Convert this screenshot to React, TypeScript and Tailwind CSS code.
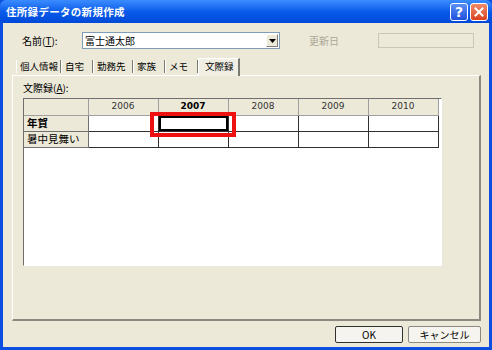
import React from "react";

const YEARS = ["2006", "2007", "2008", "2009", "2010"];
const ROWS = [
  { label: "年賀", bold: true },
  { label: "暑中見舞い", bold: false },
];
const TABS = [
  { label: "個人情報", w: "w-[45px]" },
  { label: "自宅", w: "w-[32px]" },
  { label: "勤務先", w: "w-[40px]" },
  { label: "家族", w: "w-[32px]" },
  { label: "メモ", w: "w-[33px]" },
];

const jp = "font-['Noto_Sans_CJK_JP',sans-serif]";

function TitleButton({ kind }: { kind: "help" | "close" }) {
  const bg =
    kind === "help"
      ? "bg-linear-to-b from-[#5C8FF5] to-[#1E4FDB]"
      : "bg-linear-to-b from-[#F08A6A] to-[#D9401C]";
  return (
    <div
      className={`w-[18px] h-[18px] rounded-[3px] border border-white flex items-center justify-center ${bg}`}
    >
      {kind === "help" ? (
        <span className="text-white text-[14px] font-bold leading-none font-['DejaVu_Sans',sans-serif]">?</span>
      ) : (
        <svg width="10" height="10" viewBox="0 0 10 10">
          <path d="M1.5 1.5 L8.5 8.5 M8.5 1.5 L1.5 8.5" stroke="white" strokeWidth="2" strokeLinecap="square" />
        </svg>
      )}
    </div>
  );
}

export default function App() {
  return (
    <div className={`w-[492px] h-[350px] flex flex-col bg-[#0A4FE0] ${jp} text-[10px] text-black`}>
      {/* title bar */}
      <div className="h-[23px] shrink-0 flex items-center justify-between pl-[6px] pr-[4px] rounded-t-[6px] bg-linear-to-b from-[#3B8CFF] via-[#0A5BEA] to-[#0049D8]">
        <span className="text-white font-bold text-[10.5px] tracking-[0.3px]">住所録データの新規作成</span>
        <div className="flex gap-[2px]">
          <TitleButton kind="help" />
          <TitleButton kind="close" />
        </div>
      </div>

      {/* body */}
      <div className="flex-1 mx-[3px] mb-[3px] bg-[#ECE9D8] flex flex-col">
        {/* name row */}
        <div className="flex items-center h-[17px] mt-[9px] pl-[19px]">
          <span className="w-[60px]">
            名前(<span className="underline">T</span>):
          </span>
          <div className="w-[198px] h-[17px] bg-white border border-[#7F9DB9] flex items-center">
            <span className="flex-1 pl-[2px] leading-none">富士通太郎</span>
            <div className="w-[12px] h-[13px] mr-[1px] bg-[#ECE9D8] border border-white border-r-[#808080] border-b-[#808080] flex items-center justify-center">
              <svg width="7" height="4" viewBox="0 0 7 4">
                <path d="M0 0 H7 L3.5 4 Z" fill="black" />
              </svg>
            </div>
          </div>
          <span className="ml-[29px] w-[30px] text-[#ACA899]">更新日</span>
          <div className="ml-[39px] w-[96px] h-[15px] border border-[#C9C7BA] bg-[#ECE9D8]" />
        </div>

        {/* tabs */}
        <div className="flex items-end h-[19px] mt-[7px] pl-[13px] text-[9.5px]">
          {TABS.map((t) => (
            <div
              key={t.label}
              className={`${t.w} shrink-0 h-[13px] mb-[2px] pl-[3px] flex items-center whitespace-nowrap border-l border-white border-r border-r-[#7A7A70] leading-none`}
            >
              {t.label}
            </div>
          ))}
          <div className="w-[42px] shrink-0 h-[18px] pl-[6px] pb-[2px] flex items-center whitespace-nowrap bg-[#F1EFE4] border-t border-l border-white border-r-2 border-r-[#7A7A70] mb-[-1px] relative z-10 leading-none">
            文際録
          </div>
        </div>

        {/* tab panel */}
        <div className="ml-[9px] mr-[8px] h-[246px] border border-white border-r-2 border-b-2 border-r-[#8C8A80] border-b-[#8C8A80] bg-[#ECE9D8] flex flex-col pl-[10px]">
          <span className="mt-[5px] leading-[14px]">
            文際録(<span className="underline">A</span>):
          </span>
          <div className="relative mt-[3px] w-[419px] h-[168px] bg-white border-l border-t border-[#6F6F6F] border-r border-b border-r-white border-b-white">
            <table className="border-collapse font-['Tahoma','DejaVu_Sans','Noto_Sans_CJK_JP',sans-serif] text-[9px]">
              <thead>
                <tr className="h-[16px]">
                  <th className="w-[64px] p-0 bg-[#ECE9D8] border-r border-b border-[#A0A0A0]" />
                  {YEARS.map((y) => (
                    <th
                      key={y}
                      className={`w-[70px] p-0 bg-[#ECE9D8] border-r border-b border-[#A0A0A0] border-t-0 text-center ${
                        y === "2007" ? "font-bold text-black" : "font-normal text-[#333]"
                      }`}
                    >
                      {y}
                    </th>
                  ))}
                </tr>
              </thead>
              <tbody>
                {ROWS.map((r, ri) => (
                  <tr key={r.label} className="h-[16px]">
                    <td
                      className={`p-0 pl-[3px] bg-[#ECE9D8] border-r border-b border-[#707070] font-['Noto_Sans_CJK_JP',sans-serif] text-[10.5px] leading-none ${
                        r.bold ? "font-bold" : ""
                      }`}
                    >
                      {r.label}
                    </td>
                    {YEARS.map((y) => (
                      <td key={y} className="p-0 border-r border-b border-[#303030] bg-white">
                        {ri === 0 && y === "2007" ? (
                          <div className="h-[15px] border-2 border-black" />
                        ) : null}
                      </td>
                    ))}
                  </tr>
                ))}
              </tbody>
            </table>
            {/* highlight annotation */}
            <div className="absolute left-[126px] top-[13px] w-[86px] h-[25px] border-[4px] border-[#EE1111]" />
          </div>
        </div>

        {/* buttons */}
        <div className="flex justify-end gap-[5px] mt-[5px] pr-[8px]">
          <button className="w-[68px] h-[17px] bg-[#F5F4EE] border border-[#303030] rounded-[2px] text-[10px] leading-none flex items-center justify-center">
            OK
          </button>
          <button className="w-[73px] h-[17px] bg-[#F5F4EE] border border-[#8A8A80] rounded-[2px] text-[10px] leading-none flex items-center justify-center">
            キャンセル
          </button>
        </div>
      </div>
    </div>
  );
}
